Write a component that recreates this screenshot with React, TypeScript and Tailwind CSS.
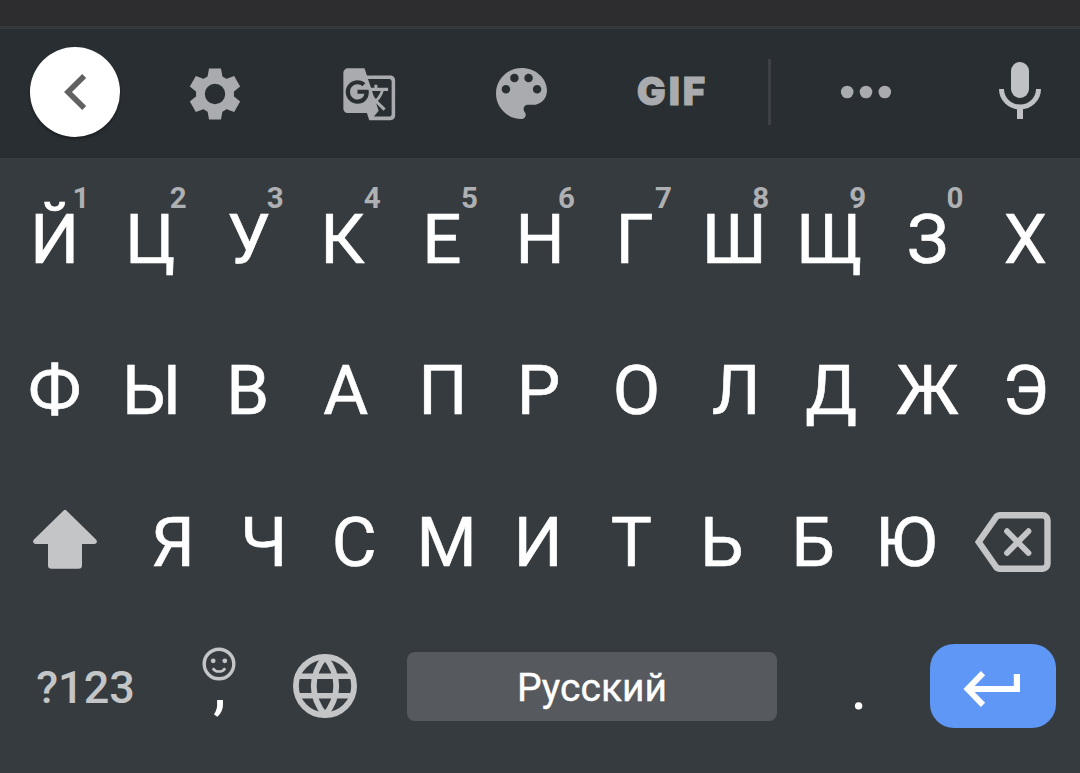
import React from "react";
import { MdGTranslate } from "react-icons/md";

interface Key {
  label: string;
  hint?: string;
  nudge?: string;
}

const topRow: Key[] = [
  { label: "Й", hint: "1" },
  { label: "Ц", hint: "2", nudge: "-ml-[3px]" },
  { label: "У", hint: "3" },
  { label: "К", hint: "4", nudge: "-ml-[7px]" },
  { label: "Е", hint: "5", nudge: "-ml-[2px]" },
  { label: "Н", hint: "6" },
  { label: "Г", hint: "7", nudge: "-ml-[5px]" },
  { label: "Ш", hint: "8" },
  { label: "Щ", hint: "9", nudge: "-ml-[4px]" },
  { label: "З", hint: "0", nudge: "-ml-[2px]" },
  { label: "Х" },
];

const middleRow: Key[] = [
  { label: "Ф" },
  { label: "Ы" },
  { label: "В", nudge: "-ml-[2px]" },
  { label: "А" },
  { label: "П" },
  { label: "Р", nudge: "-ml-[3px]" },
  { label: "О", nudge: "-ml-[1px]" },
  { label: "Л", nudge: "ml-[4px]" },
  { label: "Д" },
  { label: "Ж", nudge: "-ml-[2px]" },
  { label: "Э" },
];

const bottomRow: Key[] = [
  { label: "Я", nudge: "ml-[2px]" },
  { label: "Ч" },
  { label: "С", nudge: "-ml-[3px]" },
  { label: "М", nudge: "-ml-[2px]" },
  { label: "И", nudge: "-ml-[3px]" },
  { label: "Т" },
  { label: "Ь", nudge: "-ml-[3px]" },
  { label: "Б", nudge: "-ml-[4px]" },
  { label: "Ю", nudge: "-ml-[2px]" },
];

function LetterKey({ label, hint, nudge }: Key) {
  return (
    <button className="relative flex h-full min-w-0 flex-1 items-center justify-center text-[69px] leading-[60px] text-white [-webkit-text-stroke:0.6px_white]">
      <span className={nudge}>{label}</span>
      {hint && (
        <span className="absolute left-1/2 top-[21px] ml-[18px] text-[29.5px] font-bold leading-[26px] text-[#aeb0b3] [-webkit-text-stroke:0px]">
          {hint}
        </span>
      )}
    </button>
  );
}

function BackIcon() {
  return (
    <svg width="24" height="38" viewBox="0 0 24 38" fill="none" stroke="#616161" strokeWidth="5.6">
      <path d="M21.2 2.9 5 19 21.2 35.1" />
    </svg>
  );
}

function GearIcon() {
  return (
    <svg width="52" height="52" viewBox="-26 -26 52 52" fill="#a9abae">
      <circle r="14.6" fill="none" stroke="#a9abae" strokeWidth="8.8" />
      {[0, 60, 120, 180, 240, 300].map((angle) => (
        <path key={angle} d="M-6-25.6H6L7.5-17 5-14H-5L-7.5-17Z" transform={`rotate(${angle})`} />
      ))}
    </svg>
  );
}

function PaletteIcon() {
  return (
    <svg width="51" height="51" viewBox="3 3 18 18" fill="#a9abae">
      <path d="M12 3c-4.97 0-9 4.03-9 9s4.03 9 9 9c.83 0 1.5-.67 1.5-1.5 0-.39-.15-.74-.39-1.01-.23-.26-.38-.61-.38-.99 0-.83.67-1.5 1.5-1.5H16c2.76 0 5-2.24 5-5 0-4.42-4.03-8-9-8zm-5.5 9c-.83 0-1.5-.67-1.5-1.5S5.67 9 6.5 9 8 9.67 8 10.5 7.33 12 6.5 12zm3-4C8.67 8 8 7.33 8 6.5S8.67 5 9.5 5s1.5.67 1.5 1.5S10.33 8 9.5 8zm5 0c-.83 0-1.5-.67-1.5-1.5S13.67 5 14.5 5s1.5.67 1.5 1.5S15.33 8 14.5 8zm3 4c-.83 0-1.5-.67-1.5-1.5S16.67 9 17.5 9s1.5.67 1.5 1.5-.67 1.5-1.5 1.5z" />
    </svg>
  );
}

function MoreIcon() {
  return (
    <svg width="52" height="14" viewBox="0 0 52 14" fill="#a9abae">
      <circle cx="7.2" cy="7" r="6.3" />
      <circle cx="26" cy="7" r="6.3" />
      <circle cx="44.8" cy="7" r="6.3" />
    </svg>
  );
}

function MicIcon() {
  return (
    <svg width="42" height="57" viewBox="0 0 42 57" fill="#bfc1c4">
      <rect x="12" width="18" height="36" rx="9" />
      <path d="M2.5 27a18.5 18 0 0 0 37 0" fill="none" stroke="#bfc1c4" strokeWidth="5" />
      <rect x="18" y="46" width="6" height="11" />
    </svg>
  );
}

function ShiftIcon() {
  return (
    <svg width="64" height="60" viewBox="0 0 64 60" fill="#c4c5c7">
      <path d="M30.6 1.4a2 2 0 0 1 2.8 0L63 30.4c1.8 1.8.7 4.6-1.8 4.6H49v21.2a3.5 3.5 0 0 1-3.5 3.5h-27a3.5 3.5 0 0 1-3.5-3.5V35H2.8C.3 35-.8 32.2 1 30.4Z" />
    </svg>
  );
}

function BackspaceIcon() {
  return (
    <svg width="76" height="60" viewBox="0 0 76 60" fill="none" stroke="#c4c5c7">
      <path
        d="M25 3.2H67.5a5 5 0 0 1 5 5V51.8a5 5 0 0 1-5 5H25a5 5 0 0 1-4.2-2.3L3.7 30 20.8 5.5A5 5 0 0 1 25 3.2Z"
        strokeWidth="6.4"
      />
      <path d="M32 19.2 53.5 41M53.5 19.2 32 41" strokeWidth="5.8" strokeLinecap="round" />
    </svg>
  );
}

function SmileIcon() {
  return (
    <svg width="34" height="34" viewBox="-17 -17 34 34" fill="none" stroke="#c4c5c7" strokeWidth="3.4">
      <circle r="14.8" />
      <path d="M-6.2 4.2C-3.4 8.6 3.4 8.6 6.2 4.2" strokeWidth="2.6" />
      <circle cx="-5.8" cy="-3.2" r="2.4" fill="#c4c5c7" stroke="none" />
      <circle cx="5.8" cy="-3.2" r="2.4" fill="#c4c5c7" stroke="none" />
    </svg>
  );
}

function GlobeIcon() {
  return (
    <svg width="64" height="64" viewBox="-32 -32 64 64" fill="none" stroke="#c4c5c7" strokeWidth="5.8">
      <circle r="29.1" />
      <path d="M-27-9.8H27M-27 9.8H27" strokeWidth="5.4" />
      <path d="M0-29C-15-11-15 11 0 29C15 11 15-11 0-29Z" />
    </svg>
  );
}

function EnterIcon() {
  return (
    <svg width="58" height="38" viewBox="0 0 58 38" fill="none" stroke="#fff" strokeWidth="6.2">
      <path d="M20 3.2 4.6 19 20 34.8" strokeWidth="6" />
      <path d="M5 19H53.9V4" />
    </svg>
  );
}

export default function App() {
  return (
    <div className="flex h-[773px] w-[1080px] flex-col overflow-hidden bg-[#363b3f] font-['Roboto',sans-serif]">
      <div className="h-[29px] shrink-0 border-b-[3px] border-[#363a3e] bg-[#2d2d2f]" />

      {/* Toolbar */}
      <div className="flex h-[129px] shrink-0 items-center bg-[#292e32]">
        <div className="w-[138px] pb-[3px] pl-[30px]">
          <button className="flex h-[90px] w-[90px] items-center justify-center rounded-full bg-white shadow-[0_2px_3px_rgba(0,0,0,0.35)]">
            <BackIcon />
          </button>
        </div>
        <button className="flex w-[154px] justify-center">
          <GearIcon />
        </button>
        <button className="flex w-[154px] justify-center pt-[1px] text-[56.5px] text-[#a9abae]">
          <MdGTranslate />
        </button>
        <button className="flex w-[151px] justify-center">
          <PaletteIcon />
        </button>
        <button className="flex w-[149px] justify-center pb-[4px] pl-[2px] font-['Inter',sans-serif] text-[38.5px] font-black leading-none tracking-[3px] text-[#a9abae] [-webkit-text-stroke:0.8px_#a9abae]">
          GIF
        </button>
        <div className="mb-[3px] ml-[22px] h-[66px] w-[3px] bg-[#3d4145]" />
        <button className="flex w-[189px] justify-center pb-[3px]">
          <MoreIcon />
        </button>
        <button className="flex flex-1 justify-center pb-[6px]">
          <MicIcon />
        </button>
      </div>

      {/* Keys */}
      <div className="flex flex-col px-[6px] pt-[6px]">
        <div className="flex h-[151px]">
          {topRow.map((key) => (
            <LetterKey key={key.label} {...key} />
          ))}
        </div>
        <div className="flex h-[151px]">
          {middleRow.map((key) => (
            <LetterKey key={key.label} {...key} />
          ))}
        </div>
        <div className="flex h-[152px] pt-[1px]">
          <button className="flex w-[120px] items-center justify-center pb-[7px] pr-[2px]">
            <ShiftIcon />
          </button>
          {bottomRow.map((key) => (
            <LetterKey key={key.label} {...key} />
          ))}
          <button className="flex w-[121px] items-center justify-center pb-[2px] pr-[2px]">
            <BackspaceIcon />
          </button>
        </div>

        {/* Space bar row */}
        <div className="flex h-[136px] items-center text-white">
          <button className="w-[159px] pt-[2px] text-center text-[45px] font-medium leading-none text-[#c4c5c7]">
            ?123
          </button>
          <button className="flex h-full w-[107px] flex-col items-center pt-[29px]">
            <SmileIcon />
            <span className="-mt-[29px] ml-[2px] text-[66px] leading-[66px]">,</span>
          </button>
          <button className="flex w-[106px] justify-center">
            <GlobeIcon />
          </button>
          <div className="flex-1 px-[29px]">
            <button className="h-[69px] w-full rounded-lg bg-[#56595d] pt-[5px] text-[39px] leading-none [-webkit-text-stroke:0.4px_white]">
              Русский
            </button>
          </div>
          <button className="flex h-full w-[106px] items-start justify-center pt-[36px] text-[66px] leading-[66px]">
            .
          </button>
          <div className="flex w-[162px] justify-center">
            <button className="flex h-[84px] w-[126px] items-center justify-center rounded-3xl bg-[#5e97f6] pr-[2px] pt-[5px]">
              <EnterIcon />
            </button>
          </div>
        </div>
      </div>
    </div>
  );
}
